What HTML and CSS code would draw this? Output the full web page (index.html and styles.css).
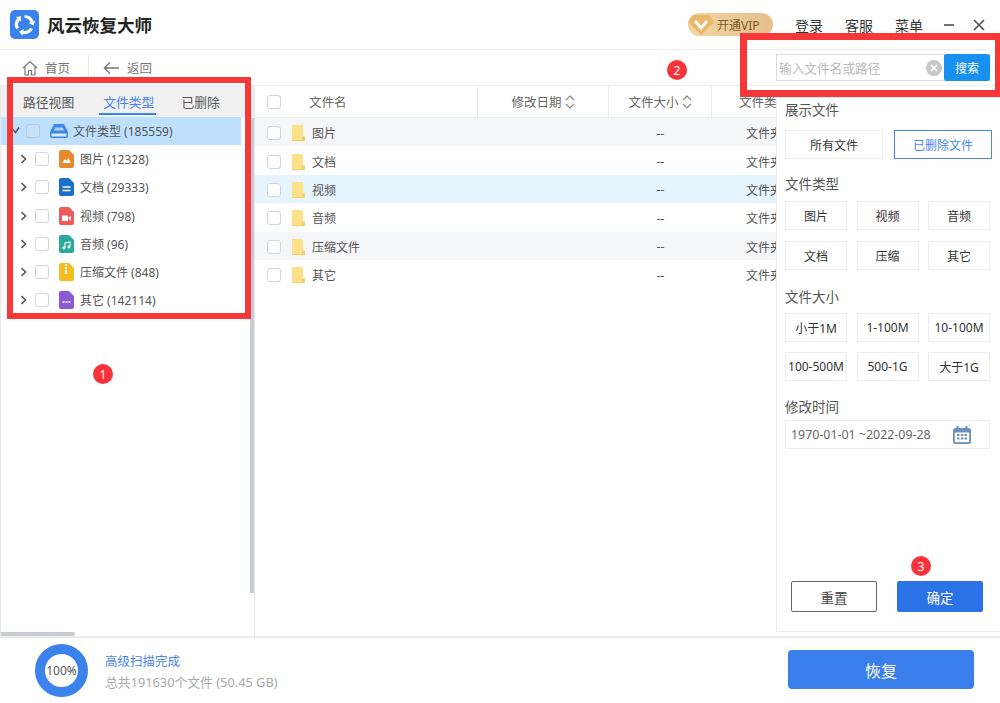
FILE: index.html
```html
<!DOCTYPE html>
<html lang="zh">
<head>
<meta charset="utf-8">
<title>风云恢复大师</title>
<link rel="stylesheet" href="styles.css">
</head>
<body>
<svg class="defs" width="0" height="0" aria-hidden="true">
  <symbol id="check-sort" viewBox="0 0 10 16">
    <path d="M1 6l4-4 4 4M1 10l4 4 4-4" fill="none" stroke="#888" stroke-width="1.2"/>
  </symbol>
  <symbol id="folder" viewBox="0 0 13 16">
    <path d="M0 0h11v11.500h2V16H0z" fill="#fde08a"/>
    <path d="M10.500 12v3.500H.5" fill="none" stroke="#f3cd62" stroke-width="1"/>
    <path d="M11 11.500h2V16h-2z" fill="#f6d264"/>
  </symbol>
  <symbol id="chev" viewBox="0 0 8 10">
    <path d="M1.500 1l4 4-4 4" fill="none" stroke="#555" stroke-width="1.600"/>
  </symbol>
  <symbol id="swoosh" viewBox="0 0 29 29">
    <path d="M14.500 6.500A8 8 0 0 1 22 11.800" fill="none" stroke="#fff" stroke-width="3.200"/>
    <path d="M23.400 15.600L25.300 10.600 18.700 13z" fill="#fff"/>
  </symbol>
</svg>

<div class="app">
  <header class="titlebar">
    <div class="brand">
      <svg class="logo" viewBox="0 0 29 29">
        <rect width="29" height="29" rx="5" fill="#3b82ec"/>
        <use href="#swoosh"/>
        <use href="#swoosh" transform="rotate(120 14.500 14.500)"/>
        <use href="#swoosh" transform="rotate(240 14.500 14.500)"/>
      </svg>
      <span class="brand-name">风云恢复大师</span>
    </div>
    <div class="title-actions">
      <div class="vip">
        <svg class="vip-icon" viewBox="0 0 26 20">
          <path d="M5 0h16l5 7-13 13L0 7z" fill="#e9b868"/>
          <path d="M7 6l6 7 6-7" fill="none" stroke="#fff" stroke-width="3"/>
        </svg>
        <span>开通VIP</span>
      </div>
      <nav class="title-nav">
        <span>登录</span><span>客服</span><span>菜单</span>
      </nav>
      <div class="win-btns">
        <svg class="win-btn" viewBox="0 0 12 12"><path d="M1 6h10" stroke="#555" stroke-width="1.700"/></svg>
        <svg class="win-btn" viewBox="0 0 12 12"><path d="M1 1l10 10M11 1L1 11" stroke="#555" stroke-width="1.700"/></svg>
      </div>
    </div>
  </header>

  <div class="toolbar">
    <div class="crumb crumb-home">
      <svg class="crumb-icon" viewBox="0 0 16 16"><path d="M1 8l7-6.500L15 8M3 6.500V15h3.500v-4.500h3V15H13V6.500" fill="none" stroke="#777" stroke-width="1.200"/></svg>
      <span>首页</span>
    </div>
    <div class="crumb-sep"></div>
    <div class="crumb crumb-back">
      <svg class="crumb-icon" viewBox="0 0 16 16"><path d="M7 2.500L1.500 8 7 13.500M1.500 8H16" fill="none" stroke="#777" stroke-width="1.500"/></svg>
      <span>返回</span>
    </div>
    <div class="search">
      <div class="search-input">
        <span>输入文件名或路径</span>
        <svg class="search-clear" viewBox="0 0 16 16"><circle cx="8" cy="8" r="8" fill="#c8c8c8"/><path d="M5 5l6 6M11 5l-6 6" stroke="#fff" stroke-width="1.600"/></svg>
      </div>
      <div class="search-btn">搜索</div>
    </div>
  </div>

  <main class="main">
    <aside class="sidebar">
      <div class="tabs">
        <span class="tab">路径视图</span>
        <span class="tab tab-active">文件类型</span>
        <span class="tab">已删除</span>
      </div>
      <ul class="tree">
        <li class="tree-root">
          <svg class="root-arrow" viewBox="0 0 8 8"><path d="M1 2.500l2.500 3L7 .5" fill="none" stroke="#555" stroke-width="1.400"/></svg>
          <span class="check check-root"></span>
          <svg class="hdd" viewBox="0 0 18 14"><path d="M4 0h10l4 8v4a2 2 0 0 1-2 2H2a2 2 0 0 1-2-2V8z" fill="#3d86ec"/><path d="M5 3.500h8l1 3H4z" fill="#a9cff6"/><path d="M1.500 9.500h15v3h-15z" fill="#d9ebfb"/></svg>
          <span>文件类型 (185559)</span>
        </li>
        <li class="tree-item">
          <svg class="chev"><use href="#chev"/></svg><span class="check"></span>
          <svg class="ficon" viewBox="0 0 15 18"><path d="M2 0h8l5 5v11a2 2 0 0 1-2 2H2a2 2 0 0 1-2-2V2a2 2 0 0 1 2-2z" fill="#e8892b"/><path d="M3 13l3-4 1.500 2L9.500 8 12 13z" fill="#fff"/></svg>
          <span>图片 (12328)</span>
        </li>
        <li class="tree-item">
          <svg class="chev"><use href="#chev"/></svg><span class="check"></span>
          <svg class="ficon" viewBox="0 0 15 18"><path d="M2 0h8l5 5v11a2 2 0 0 1-2 2H2a2 2 0 0 1-2-2V2a2 2 0 0 1 2-2z" fill="#1a6fc9"/><path d="M3.500 9h8M3.500 12.500h8" stroke="#fff" stroke-width="1.300"/></svg>
          <span>文档 (29333)</span>
        </li>
        <li class="tree-item">
          <svg class="chev"><use href="#chev"/></svg><span class="check"></span>
          <svg class="ficon" viewBox="0 0 15 18"><path d="M2 0h8l5 5v11a2 2 0 0 1-2 2H2a2 2 0 0 1-2-2V2a2 2 0 0 1 2-2z" fill="#ec5a5a"/><path d="M3 8.500h6v5.500H3zM9.500 10.500l2.500-1.500v4.500l-2.500-1.500z" fill="#fff"/></svg>
          <span>视频 (798)</span>
        </li>
        <li class="tree-item">
          <svg class="chev"><use href="#chev"/></svg><span class="check"></span>
          <svg class="ficon" viewBox="0 0 15 18"><path d="M2 0h8l5 5v11a2 2 0 0 1-2 2H2a2 2 0 0 1-2-2V2a2 2 0 0 1 2-2z" fill="#2ba99b"/><path d="M6 13V8l5-1v5" fill="none" stroke="#fff" stroke-width="1.100"/><circle cx="4.800" cy="13" r="1.400" fill="#fff"/><circle cx="9.800" cy="12" r="1.400" fill="#fff"/></svg>
          <span>音频 (96)</span>
        </li>
        <li class="tree-item">
          <svg class="chev"><use href="#chev"/></svg><span class="check"></span>
          <svg class="ficon" viewBox="0 0 15 18"><path d="M2 0h8l5 5v11a2 2 0 0 1-2 2H2a2 2 0 0 1-2-2V2a2 2 0 0 1 2-2z" fill="#f6bd1f"/><path d="M6 1h2v2H6zM6 4h2v2H6zM6 7h2v4H6z" fill="#fff"/></svg>
          <span>压缩文件 (848)</span>
        </li>
        <li class="tree-item">
          <svg class="chev"><use href="#chev"/></svg><span class="check"></span>
          <svg class="ficon" viewBox="0 0 15 18"><path d="M2 0h8l5 5v11a2 2 0 0 1-2 2H2a2 2 0 0 1-2-2V2a2 2 0 0 1 2-2z" fill="#8a5ad4"/><path d="M3.500 11h2M6.500 11h2M9.500 11h2" stroke="#fff" stroke-width="1.400"/></svg>
          <span>其它 (142114)</span>
        </li>
      </ul>
      <div class="vscroll"></div>
      <div class="hscroll"></div>
    </aside>

    <section class="table">
      <div class="thead">
        <div class="th th-name"><span class="check"></span><span>文件名</span></div>
        <div class="th th-sort"><span>修改日期</span><svg class="sort"><use href="#check-sort"/></svg></div>
        <div class="th th-sort"><span>文件大小</span><svg class="sort"><use href="#check-sort"/></svg></div>
        <div class="th th-type"><span>文件类型</span></div>
      </div>
      <div class="tr tr-grey"><div class="td-name"><span class="check"></span><svg class="folder"><use href="#folder"/></svg><span>图片</span></div><div></div><div class="td-size">--</div><div class="td-type">文件夹</div></div>
      <div class="tr"><div class="td-name"><span class="check"></span><svg class="folder"><use href="#folder"/></svg><span>文档</span></div><div></div><div class="td-size">--</div><div class="td-type">文件夹</div></div>
      <div class="tr tr-blue"><div class="td-name"><span class="check"></span><svg class="folder"><use href="#folder"/></svg><span>视频</span></div><div></div><div class="td-size">--</div><div class="td-type">文件夹</div></div>
      <div class="tr"><div class="td-name"><span class="check"></span><svg class="folder"><use href="#folder"/></svg><span>音频</span></div><div></div><div class="td-size">--</div><div class="td-type">文件夹</div></div>
      <div class="tr tr-grey"><div class="td-name"><span class="check"></span><svg class="folder"><use href="#folder"/></svg><span>压缩文件</span></div><div></div><div class="td-size">--</div><div class="td-type">文件夹</div></div>
      <div class="tr"><div class="td-name"><span class="check"></span><svg class="folder"><use href="#folder"/></svg><span>其它</span></div><div></div><div class="td-size">--</div><div class="td-type">文件夹</div></div>
    </section>

    <aside class="filter">
      <h3 class="filter-title ft-show">展示文件</h3>
      <div class="show-row">
        <div class="opt">所有文件</div>
        <div class="opt opt-del">已删除文件</div>
      </div>
      <h3 class="filter-title ft-type">文件类型</h3>
      <div class="opt-grid opt-grid-type">
        <div class="opt">图片</div><div class="opt">视频</div><div class="opt">音频</div>
        <div class="opt">文档</div><div class="opt">压缩</div><div class="opt">其它</div>
      </div>
      <h3 class="filter-title ft-size">文件大小</h3>
      <div class="opt-grid">
        <div class="opt">小于1M</div><div class="opt">1-100M</div><div class="opt">10-100M</div>
        <div class="opt">100-500M</div><div class="opt">500-1G</div><div class="opt">大于1G</div>
      </div>
      <h3 class="filter-title ft-time">修改时间</h3>
      <div class="date">
        <span>1970-01-01 ~2022-09-28</span>
        <svg class="cal" viewBox="0 0 18 18"><rect y="2" width="18" height="16" rx="2.500" fill="#6d8fbd"/><rect x="1.800" y="6.500" width="14.400" height="9.700" fill="#fff"/><path d="M4.500 0v4M13.500 0v4" stroke="#6d8fbd" stroke-width="2"/><path d="M4 9h2.500M7.800 9h2.500M11.500 9H14M4 12.500h2.500M7.800 12.500h2.500M11.500 12.500H14" stroke="#6d8fbd" stroke-width="1.800"/></svg>
      </div>
      <div class="filter-actions">
        <div class="btn-reset">重置</div>
        <div class="btn-ok">确定</div>
      </div>
    </aside>
  </main>

  <footer class="footer">
    <div class="ring"><span>100%</span></div>
    <div class="status">
      <div class="status-main">高级扫描完成</div>
      <div class="status-sub">总共191630个文件 (50.45 GB)</div>
    </div>
    <div class="recover">恢复</div>
  </footer>

  <div class="mark mark-1"></div>
  <div class="mark mark-2"></div>
  <div class="badge badge-1">1</div>
  <div class="badge badge-2">2</div>
  <div class="badge badge-3">3</div>
</div>
</body>
</html>
```

FILE: styles.css
```css
* { box-sizing: border-box; }
html, body { margin: 0; padding: 0; }
body {
  font-family: "Noto Sans", "Noto Sans CJK SC", sans-serif;
  font-size: 12px;
  color: #555;
  background: #fff;
}
.defs { position: absolute; }
.app {
  position: relative;
  width: 1000px;
  height: 703px;
  overflow: hidden;
  display: flex;
  flex-direction: column;
}

/* title bar */
.titlebar {
  height: 50px;
  flex: none;
  display: flex;
  align-items: center;
  justify-content: space-between;
  padding: 0 15px 0 10px;
  border-bottom: 1px solid #ececec;
}
.brand { display: flex; align-items: center; gap: 8px; }
.logo { width: 29px; height: 29px; }
.brand-name { font-size: 17.500px; font-weight: 700; color: #222; }
.title-actions { display: flex; align-items: center; }
.vip {
  width: 85px;
  height: 23px;
  margin-right: 22px;
  border-radius: 12px;
  background: linear-gradient(90deg, #f2d6a4, #e6c08a);
  display: flex;
  align-items: center;
  font-size: 12px;
  color: #7c5a28;
}
.vip-icon { width: 26px; height: 20px; margin-right: 3px; }
.title-nav { display: flex; gap: 22px; font-size: 14px; color: #333; }
.win-btns { display: flex; gap: 18px; margin-left: 20px; }
.win-btn { width: 12px; height: 12px; display: block; }

/* toolbar */
.toolbar {
  height: 35px;
  flex: none;
  display: flex;
  align-items: center;
  padding-left: 22px;
  color: #777;
  font-size: 12.500px;
}
.crumb { display: flex; align-items: center; gap: 7px; }
.crumb-back { gap: 8px; margin-left: 14px; }
.crumb-icon { width: 16px; height: 16px; }
.crumb-sep { width: 1px; height: 26px; background: #e8e8e8; margin-left: 18px; }
.search { margin-left: auto; margin-right: 10px; display: flex; height: 27px; }
.search-input {
  width: 168px;
  border: 1px solid #ddd;
  border-right: 0;
  display: flex;
  align-items: center;
  justify-content: space-between;
  padding: 0 2px 0 2px;
  color: #bbb;
  font-size: 12.700px;
}
.search-clear { width: 16px; height: 16px; }
.search-btn {
  width: 46px;
  background: #1890f0;
  color: #fff;
  border-radius: 2px;
  display: flex;
  align-items: center;
  justify-content: center;
  font-size: 12px;
}

/* main area */
.main {
  flex: 1;
  display: flex;
  min-height: 0;
  border-top: 1px solid #ececec;
  border-bottom: 2px solid #ececec;
}
.sidebar {
  position: relative;
  width: 255px;
  flex: none;
  border-left: 1px solid #e8e8e8;
  border-right: 1px solid #e8e8e8;
}
.tabs {
  height: 31px;
  background: #f1f1f1;
  display: flex;
  align-items: center;
  padding-left: 22px;
  font-size: 12.800px;
  color: #555;
}
.tab { position: relative; margin-right: 29px; }
.tab:nth-child(2) { margin-right: 27px; }
.tab-active { color: #4a86ee; }
.tab-active::after {
  content: "";
  position: absolute;
  left: -4px;
  right: -2px;
  bottom: -4px;
  height: 2px;
  background: #3b82ec;
}
.tree { list-style: none; margin: 0; padding: 0; }
.tree-root, .tree-item {
  height: 28.200px;
  display: flex;
  align-items: center;
}
.tree-root {
  width: 240px;
  background: #bfe0fd;
  padding-left: 11px;
}
.tree-item { padding-left: 19px; }
.root-arrow { width: 8px; height: 8px; margin-right: 6px; }
.check {
  width: 14px;
  height: 14px;
  flex: none;
  border: 1px solid #d4d4d4;
  border-radius: 3px;
  background: #fff;
}
.check-root { background: #c4e2fb; border-color: #bcc8d4; }
.hdd { width: 18px; height: 14px; margin: 0 5px 0 10px; }
.chev { width: 8px; height: 10px; margin-right: 7px; }
.ficon { width: 15px; height: 18px; margin: 0 6px 0 10px; }
.vscroll {
  position: absolute;
  right: 0;
  top: 32px;
  width: 4px;
  height: 475px;
  background: #c8ccd0;
}
.hscroll {
  position: absolute;
  left: 0;
  bottom: 0;
  width: 74px;
  height: 4px;
  background: #c8ccd0;
  border-radius: 0 2px 2px 0;
}

/* table */
.table { flex: 1; min-width: 0; overflow: hidden; }
.thead, .tr {
  display: grid;
  grid-template-columns: 223px 131px 103px 1fr;
  width: 521px;
}
.thead { height: 32px; border-bottom: 1px solid #ececec; font-size: 12.500px; color: #666; }
.th { display: flex; align-items: center; border-right: 1px solid #ececec; }
.th-name { padding-left: 12px; gap: 28px; }
.th-sort { justify-content: center; gap: 3px; }
.th-type { border-right: 0; padding-left: 27px; white-space: nowrap; }
.sort { width: 10px; height: 16px; }
.tr { height: 28.400px; padding-top: 2px; align-items: center; color: #555; }
.tr-grey { background: #f5f6f8; }
.tr-blue { background: #e6f4fe; }
.td-name { display: flex; align-items: center; padding-left: 12px; }
.folder { width: 13px; height: 16px; margin: 0 7px 0 11px; }
.td-size { text-align: center; }
.td-type { padding-left: 34px; white-space: nowrap; }

/* filter panel */
.filter {
  width: 224px;
  flex: none;
  margin: 11px 0 4px;
  border: 1px solid #ececec;
  border-right: 0;
  padding: 0 8px;
  background: #fff;
  display: flex;
  flex-direction: column;
}
.filter-title {
  margin: 0;
  font-size: 13.500px;
  line-height: 20px;
  font-weight: 400;
  color: #555;
}
.ft-show { margin: 2px 0 10px; }
.ft-type { margin: 15px 0 7px; }
.ft-size { margin: 17px 0 6px; }
.ft-time { margin: 16px 0 3px; }
.show-row { display: flex; gap: 11px; }
.show-row .opt { width: 98px; }
.opt {
  height: 29px;
  border: 1px solid #ededed;
  display: flex;
  align-items: center;
  justify-content: center;
  color: #333;
  white-space: nowrap;
}
.opt-del { border-color: #4a86ee; color: #4a86ee; }
.opt-grid {
  display: grid;
  grid-template-columns: repeat(3, 62px);
  column-gap: 9.500px;
  row-gap: 10px;
}
.opt-grid-type { row-gap: 11px; }
.date {
  width: 205px;
  height: 29px;
  border: 1px solid #ededed;
  display: flex;
  align-items: center;
  justify-content: space-between;
  padding: 0 18px 0 5px;
  color: #666;
  font-size: 12.400px;
}
.cal { width: 18px; height: 18px; }
.filter-actions {
  margin-top: auto;
  margin-bottom: 19px;
  padding-left: 6px;
  display: flex;
  gap: 20px;
}
.btn-reset, .btn-ok {
  width: 86px;
  height: 31px;
  border-radius: 2px;
  display: flex;
  align-items: center;
  justify-content: center;
  font-size: 13.500px;
}
.btn-reset { border: 1px solid #666; color: #444; }
.btn-ok { background: #2b72e6; color: #fff; }

/* footer */
.footer {
  height: 65px;
  flex: none;
  display: flex;
  align-items: center;
  padding-left: 35px;
}
.ring {
  width: 53px;
  height: 53px;
  border: 10px solid #3b82ec;
  border-radius: 50%;
  display: flex;
  align-items: center;
  justify-content: center;
  font-size: 12px;
  color: #555;
  white-space: nowrap;
}
.status { margin-left: 17px; padding-top: 2px; line-height: 21px; }
.status-main { font-size: 12.500px; color: #4a86ee; }
.status-sub { font-size: 12.800px; color: #aaa; }
.recover {
  width: 186px;
  height: 39px;
  margin: -2px 26px 0 auto;
  border-radius: 4px;
  background: #3a7fec;
  color: #fff;
  font-size: 16px;
  display: flex;
  align-items: center;
  justify-content: center;
}

/* annotations drawn over the screenshot */
.mark { position: absolute; border: 6px solid #f83838; }
.mark-1 { left: 7px; top: 77px; width: 244px; height: 242px; }
.mark-2 { left: 740px; top: 33px; width: 262px; height: 64px; border-width: 7px; }
.badge {
  position: absolute;
  width: 20px;
  height: 20px;
  border-radius: 50%;
  background: #f8323a;
  color: #fff;
  font-size: 12px;
  display: flex;
  align-items: center;
  justify-content: center;
}
.badge-1 { left: 93px; top: 364px; }
.badge-2 { left: 667px; top: 60px; }
.badge-3 { left: 911px; top: 556px; }
```
